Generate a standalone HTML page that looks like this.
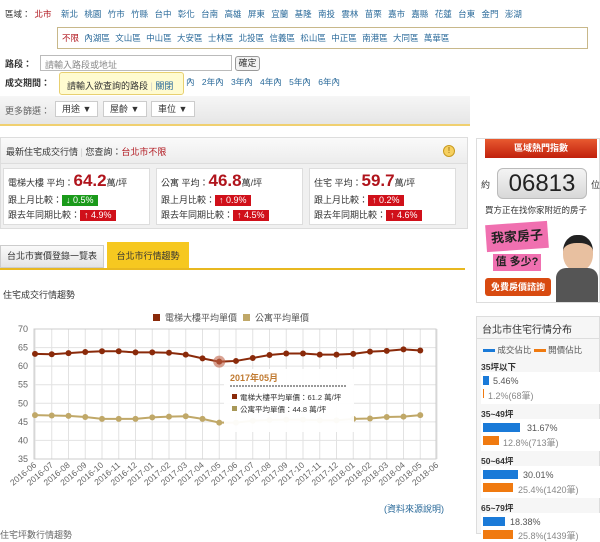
<!DOCTYPE html><html><head><meta charset="utf-8"><style>
*{margin:0;padding:0;box-sizing:border-box}
body{width:600px;height:534px;overflow:hidden;background:#fff;font-family:"Liberation Sans","Noto Sans CJK TC",sans-serif;font-size:9px;color:#333;position:relative}
.a{position:absolute;white-space:nowrap}
.l{color:#2a6a9a}
.red{color:#b0141c}
.tag{display:inline-block;color:#fff;padding:0 4px;font-size:9px;line-height:11px}
.g{background:#1a9a1a}.r{background:#d0101a}
.dd{position:absolute;top:101px;height:16px;border:1px solid #ccc;background:#fff;font-size:9px;line-height:14px;padding-left:6px}
.box{position:absolute;top:168px;width:147px;height:57px;border:1px solid #ddd;background:#fff}
.big{color:#b0141c;font-weight:bold;font-size:17px}
</style></head><body>
<div class="a" style="left:5px;top:8px;font-size:8.5px">區域：<span class="red" style="margin-left:4px">北市</span></div>
<div class="a l" style="left:61px;top:8px;word-spacing:4px;font-size:8.5px">新北 桃園 竹市 竹縣 台中 彰化 台南 高雄 屏東 宜蘭 基隆 南投 雲林 苗栗 嘉市 嘉縣 花蓮 台東 金門 澎湖</div>
<div class="a" style="left:57px;top:27px;width:531px;height:22px;border:1px solid #c8b88a;background:#fff"></div>
<div class="a" style="left:62px;top:32px;font-size:8.5px"><span class="red">不限</span><span class="l" style="word-spacing:3px"> 內湖區 文山區 中山區 大安區 士林區 北投區 信義區 松山區 中正區 南港區 大同區 萬華區</span></div>
<div class="a" style="left:5px;top:57px;font-weight:bold">路段：</div>
<div class="a" style="left:40px;top:55px;width:192px;height:16px;border:1px solid #bbb;color:#888;padding:2px 4px">請輸入路段或地址</div>
<div class="a" style="left:235px;top:56px;width:25px;height:15px;border:1px solid #999;border-radius:3px;background:#f2f2f2;text-align:center;line-height:13px">確定</div>
<div class="a" style="left:5px;top:76px;font-weight:bold">成交期間：</div>
<div class="a l" style="left:186px;top:76px;word-spacing:5px;font-size:8.5px">內 2年內 3年內 4年內 5年內 6年內</div>
<div class="a" style="left:59px;top:72px;width:125px;height:23px;background:#fffbd0;border:1px solid #e8d070;border-radius:3px;padding:6px 7px;font-size:9px">請輸入欲查詢的路段 <span style="color:#ccc">|</span> <span class="l">關閉</span></div>
<div class="a" style="left:0;top:96px;width:470px;height:28px;background:linear-gradient(#f6f6f6,#e6e6e6)"></div>
<div class="a" style="left:5px;top:104px;color:#666">更多篩選：</div>
<div class="dd" style="left:55px;width:43px">用途 ▼</div>
<div class="dd" style="left:103px;width:44px">屋齡 ▼</div>
<div class="dd" style="left:151px;width:44px">車位 ▼</div>
<div class="a" style="left:0;top:124px;width:470px;height:2px;background:#f0d070"></div>

<div class="a" style="left:0;top:137px;width:468px;height:92px;background:#f0f0f0;border:1px solid #ddd"></div>
<div class="a" style="left:0;top:137px;width:468px;height:27px;background:linear-gradient(#fafafa,#ececec);border:1px solid #ddd"></div>
<div class="a" style="left:6px;top:145px">最新住宅成交行情 <span style="color:#ccc">|</span> 您查詢：<span class="red">台北市不限</span></div>
<div class="a" style="left:443px;top:145px;width:12px;height:12px;border-radius:50%;background:#f6d060;border:1px solid #c89a20;font-size:8px;text-align:center;line-height:10px;color:#8a5a00">!</div>
<div class="box" style="left:3px"></div><div class="box" style="left:156px"></div><div class="box" style="left:309px"></div>
<div class="a" style="left:8px;top:171px">電梯大樓 平均：<span class="big">64.2</span>萬/坪</div>
<div class="a" style="left:8px;top:193px">跟上月比較：<span class="tag g">↓ 0.5%</span></div>
<div class="a" style="left:8px;top:208px">跟去年同期比較：<span class="tag r">↑ 4.9%</span></div>
<div class="a" style="left:161px;top:171px">公寓 平均：<span class="big">46.8</span>萬/坪</div>
<div class="a" style="left:161px;top:193px">跟上月比較：<span class="tag r">↑ 0.9%</span></div>
<div class="a" style="left:161px;top:208px">跟去年同期比較：<span class="tag r">↑ 4.5%</span></div>
<div class="a" style="left:314px;top:171px">住宅 平均：<span class="big">59.7</span>萬/坪</div>
<div class="a" style="left:314px;top:193px">跟上月比較：<span class="tag r">↑ 0.2%</span></div>
<div class="a" style="left:314px;top:208px">跟去年同期比較：<span class="tag r">↑ 4.6%</span></div>

<div class="a" style="left:0;top:245px;width:104px;height:23px;background:linear-gradient(#fafafa,#e4e4e4);border:1px solid #ccc;text-align:center;line-height:21px">台北市實價登錄一覽表</div>
<div class="a" style="left:107px;top:242px;width:82px;height:26px;background:#f6c820;text-align:center;line-height:28px">台北市行情趨勢</div>
<div class="a" style="left:0;top:268px;width:465px;height:2px;background:#e8b820"></div>
<div class="a" style="left:3px;top:288px">住宅成交行情趨勢</div>
<div class="a" style="left:0;top:528px;color:#666">住宅坪數行情趨勢</div>

<svg class="a" style="left:0;top:300px" width="470" height="220" viewBox="0 300 470 220">
<g stroke="#e2e2e2" stroke-width="1" fill="none" id="grid"></g>
<rect x="34" y="329" width="402" height="130" fill="none" stroke="#ccc"/>
<rect x="153" y="314" width="7" height="7" fill="#8a2a0a"/><text x="165" y="321" font-size="9" fill="#555">電梯大樓平均單價</text>
<rect x="243" y="314" width="7" height="7" fill="#c0a868"/><text x="255" y="321" font-size="9" fill="#555">公寓平均單價</text>
<g id="g2"></g>
<rect x="224" y="369" width="130" height="63" fill="#fff" opacity=".95"/>
<text x="230" y="381" font-size="9" font-weight="bold" fill="#c07a30">2017年05月</text>
<line x1="230" y1="386" x2="346" y2="386" stroke="#333" stroke-dasharray="2,1"/>
<rect x="232" y="394" width="5" height="5" fill="#8a2a0a"/><text x="240" y="400" font-size="7.5" fill="#333">電梯大樓平均單價：61.2 萬/坪</text>
<rect x="232" y="406" width="5" height="5" fill="#a89858"/><text x="240" y="412" font-size="7.5" fill="#333">公寓平均單價：44.8 萬/坪</text>
<text x="384" y="512" font-size="9" fill="#2a6a9a">(資料來源說明)</text>
</svg>
<script>
(function(){var s=document.querySelector('svg'),ns='http://www.w3.org/2000/svg';
function e(t,a,p){var n=document.createElementNS(ns,t);for(var k in a)n.setAttribute(k,a[k]);(p||s).appendChild(n);return n}
var grid=document.getElementById('grid');
function Y(v){return 329+(70-v)*3.714}
for(var v=35;v<=70;v+=5){e('line',{x1:34,x2:436,y1:Y(v),y2:Y(v)},grid);var t=e('text',{x:28,y:Y(v)+3,'font-size':9,fill:'#666','text-anchor':'end'});t.textContent=v}
var labs=[];for(var i=0;i<25;i++){var m=(5+i)%12+1,yr=2016+Math.floor((5+i)/12);labs.push(yr+'-'+(m<10?'0':'')+m)}
for(var i=0;i<25;i++){var x=35+i*16.75;e('line',{x1:x,x2:x,y1:329,y2:459},grid);var t=e('text',{x:x+2,y:466,'font-size':8.5,fill:'#666','text-anchor':'end',transform:'rotate(-40 '+(x+2)+' 466)'});t.textContent=labs[i]}
var a=[63.3,63.2,63.5,63.8,64,64,63.7,63.7,63.6,63.1,62.1,61.2,61.4,62.2,63,63.4,63.4,63.1,63.1,63.3,63.9,64.1,64.5,64.2];
var b=[46.8,46.7,46.6,46.3,45.8,45.8,45.8,46.2,46.4,46.5,45.8,44.8,44.8,45.3,45.5,45.6,45.6,45.4,45.4,45.8,45.9,46.3,46.4,46.8];
function line(d,c,g){var p=d.map(function(v,i){return (35+i*16.75)+','+Y(v)}).join(' ');e('polyline',{points:p,fill:'none',stroke:c,'stroke-width':2},g);d.forEach(function(v,i){e('circle',{cx:35+i*16.75,cy:Y(v),r:3,fill:c},g)})}
var g2=document.getElementById('g2');
line(b,'#c0a868',g2);line(a,'#8a2a0a',g2);
e('circle',{cx:35+11*16.75,cy:Y(61.2),r:6,fill:'#c0644a',opacity:.6},g2);
})();
</script>

<div class="a" style="left:476px;top:138px;width:124px;height:165px;border:1px solid #ddd;background:#fff"></div>
<div class="a" style="left:485px;top:139px;width:112px;height:19px;background:linear-gradient(#e85a30,#c0200c);color:#fff;font-weight:bold;text-align:center;line-height:19px;font-size:9px">區域熱門指數</div>
<div class="a" style="left:481px;top:178px">約</div>
<div class="a" style="left:497px;top:168px;width:90px;height:31px;border-radius:6px;background:linear-gradient(#f4f4f4,#d8d8d8);border:1px solid #bbb;text-align:center;font-size:24px;line-height:29px;color:#222">06813</div>
<div class="a" style="left:591px;top:178px">位</div>
<div class="a" style="left:485px;top:204px;font-size:8.5px">買方正在找你家附近的房子</div>
<div class="a" style="left:486px;top:223px;width:62px;height:27px;background:#f070b0;transform:rotate(-4deg);color:#222;font-weight:bold;font-size:13px;text-align:center;line-height:27px">我家房子</div>
<div class="a" style="left:493px;top:254px;width:48px;height:17px;background:#f070b0;color:#222;font-weight:bold;font-size:11px;text-align:center;line-height:17px">值 多少?</div>
<div class="a" style="left:485px;top:278px;width:66px;height:18px;background:#d84a10;border-radius:3px;color:#fff;font-weight:bold;font-size:9px;text-align:center;line-height:18px">免費房價諮詢</div>
<div class="a" style="left:563px;top:235px;width:30px;height:36px;border-radius:45%;background:#e8c0a0;border-top:8px solid #222"></div>
<div class="a" style="left:556px;top:268px;width:42px;height:34px;background:#555;border-radius:10px 10px 0 0"></div>

<div class="a" style="left:476px;top:316px;width:124px;height:218px;border:1px solid #ddd;background:#f6f6f6"></div>
<div class="a" style="left:482px;top:321px;font-size:10px">台北市住宅行情分布</div>
<div class="a" style="left:476px;top:338px;width:124px;height:1px;background:#ddd"></div>
<div class="a" style="left:483px;top:344px;font-size:8.5px;color:#555"><span style="display:inline-block;width:12px;height:3px;background:#1a7ad8;vertical-align:middle"></span> 成交佔比 <span style="display:inline-block;width:12px;height:3px;background:#f07a10;vertical-align:middle"></span> 開價佔比</div>
<div class="a" style="left:481px;top:361px;font-weight:bold;font-size:8.5px">35坪以下</div>
<div class="a" style="left:481px;top:372px;width:119px;height:32px;background:#fff"></div>
<div class="a" style="left:483px;top:376px;width:6px;height:9px;background:#1a7ad8"></div><div class="a" style="left:493px;top:376px;color:#555">5.46%</div>
<div class="a" style="left:483px;top:389px;width:1px;height:9px;background:#f07a10"></div><div class="a" style="left:488px;top:389px;color:#888">1.2%(68筆)</div>
<div class="a" style="left:481px;top:408px;font-weight:bold;font-size:8.5px">35~49坪</div>
<div class="a" style="left:481px;top:419px;width:119px;height:32px;background:#fff"></div>
<div class="a" style="left:483px;top:423px;width:37px;height:9px;background:#1a7ad8"></div><div class="a" style="left:527px;top:423px;color:#555">31.67%</div>
<div class="a" style="left:483px;top:436px;width:16px;height:9px;background:#f07a10"></div><div class="a" style="left:503px;top:436px;color:#888">12.8%(713筆)</div>
<div class="a" style="left:481px;top:455px;font-weight:bold;font-size:8.5px">50~64坪</div>
<div class="a" style="left:481px;top:466px;width:119px;height:32px;background:#fff"></div>
<div class="a" style="left:483px;top:470px;width:35px;height:9px;background:#1a7ad8"></div><div class="a" style="left:523px;top:470px;color:#555">30.01%</div>
<div class="a" style="left:483px;top:483px;width:30px;height:9px;background:#f07a10"></div><div class="a" style="left:518px;top:483px;color:#888">25.4%(1420筆)</div>
<div class="a" style="left:481px;top:502px;font-weight:bold;font-size:8.5px">65~79坪</div>
<div class="a" style="left:481px;top:513px;width:119px;height:21px;background:#fff"></div>
<div class="a" style="left:483px;top:517px;width:22px;height:9px;background:#1a7ad8"></div><div class="a" style="left:510px;top:517px;color:#555">18.38%</div>
<div class="a" style="left:483px;top:530px;width:30px;height:9px;background:#f07a10"></div><div class="a" style="left:518px;top:529px;color:#888">25.8%(1439筆)</div>
</body></html>
